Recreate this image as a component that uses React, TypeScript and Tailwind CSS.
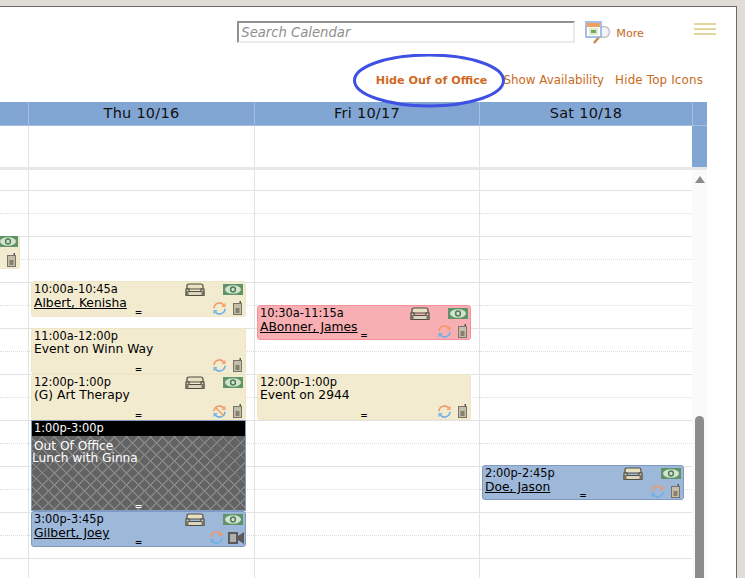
const Money = () => (
  <svg width="20" height="11" viewBox="0 0 20 11">
    <rect width="20" height="11" fill="#5f9368" />
    <ellipse cx="10" cy="5.5" rx="8" ry="4.2" fill="#d5e2d0" />
    <circle cx="10" cy="5.5" r="2.4" fill="none" stroke="#4c7f58" strokeWidth="1.5" />
  </svg>
);

const Couch = () => (
  <svg width="20" height="13" viewBox="0 0 20 13">
    <path d="M4 1h12q2 0 2 2v3H2V3q0-2 2-2z" fill="#e8e0c0" stroke="#4f4c44" strokeWidth="1.2" />
    <path d="M1 6h3v2.5h12V6h3v6.5H1z" fill="#dcd6bc" stroke="#4f4c44" strokeWidth="1.2" />
    <path d="M0.5 8v4.5h3V8zM16.5 8v4.5h3V8z" fill="#77735f" />
  </svg>
);

const Sync = ({ off }: { off?: boolean }) => (
  <svg width="13" height="13" viewBox="0 0 13 13" fill="none">
    <path d="M1 6.2A5.5 5.5 0 0 1 10.9 3.2" stroke="#f09a6a" strokeWidth="1.6" />
    <path d="M8.8 4.2l3 .2.3-3" stroke="#f09a6a" strokeWidth="1.3" />
    <path d="M12 6.8A5.5 5.5 0 0 1 2.1 9.8" stroke="#6fb0e8" strokeWidth="1.6" />
    <path d="M4.2 8.8l-3-.2-.3 3" stroke="#6fb0e8" strokeWidth="1.3" />
    {off && <path d="M2.5 2.5l8 8" stroke="#f09a6a" strokeWidth="1.5" />}
  </svg>
);

const Phone = () => (
  <svg width="9" height="14" viewBox="0 0 9 14">
    <path d="M6.5 0h1.5v3H6.5z" fill="#555" />
    <rect x="0.5" y="2.5" width="8" height="11" fill="#c4bdaa" stroke="#77736a" />
    <rect x="2.5" y="7" width="4" height="5" fill="#85816f" />
  </svg>
);

const Camera = () => (
  <svg width="16" height="12" viewBox="0 0 16 12">
    <rect width="10" height="12" fill="#5c5a58" />
    <rect x="2" y="2" width="6" height="8" fill="#b0b0b0" />
    <path d="M10 4l6-4v12l-6-4z" fill="#5c5a58" />
  </svg>
);

const CalendarSearch = () => (
  <svg width="26" height="23" viewBox="0 0 26 23">
    <circle cx="19" cy="11" r="5.5" fill="#f4f4f4" stroke="#c4c4c4" strokeWidth="1.5" />
    <path d="M14 16l-5 6" stroke="#c98a4a" strokeWidth="2.4" />
    <rect x="1" y="1" width="15" height="15" fill="#fff" stroke="#92b0dc" strokeWidth="1.6" />
    <rect x="2" y="2" width="13" height="4" fill="#f0a060" />
    <rect x="4" y="7" width="9" height="7" fill="#dcecc8" />
    <rect x="6" y="9" width="5" height="3" fill="#7aa860" />
  </svg>
);

type Item = {
  left: number;
  top: number;
  width: number;
  height: number;
  time: string;
  title: string;
  link?: boolean;
  color: string;
  couch?: boolean;
  money?: boolean;
  off?: boolean;
  camera?: boolean;
};

const beige = "bg-[#f3ebcf] border-[#efe6c8]";
const blue = "bg-[#9db8d9] border-[#7f9cc0]";
const pink = "bg-[#f8afb3] border-[#f59298]";

const days: { label: string; width: string; items: Item[] }[] = [
  {
    label: "Thu 10/16",
    width: "w-[226px]",
    items: [
      { left: 2, top: 111, width: 215, height: 36, time: "10:00a-10:45a", title: "Albert, Kenisha", link: true, color: beige, couch: true, money: true },
      { left: 2, top: 158, width: 215, height: 46, time: "11:00a-12:00p", title: "Event on Winn Way", color: beige },
      { left: 2, top: 204, width: 215, height: 46, time: "12:00p-1:00p", title: "(G) Art Therapy", color: beige, couch: true, money: true, off: true },
      { left: 2, top: 341, width: 215, height: 36, time: "3:00p-3:45p", title: "Gilbert, Joey", link: true, color: blue, couch: true, money: true, camera: true },
    ],
  },
  {
    label: "Fri 10/17",
    width: "w-[225px]",
    items: [
      { left: 2, top: 135, width: 214, height: 35, time: "10:30a-11:15a", title: "ABonner, James", link: true, color: pink, couch: true, money: true },
      { left: 2, top: 204, width: 214, height: 46, time: "12:00p-1:00p", title: "Event on 2944", color: beige },
    ],
  },
  {
    label: "Sat 10/18",
    width: "w-[213px]",
    items: [
      { left: 2, top: 295, width: 202, height: 35, time: "2:00p-2:45p", title: "Doe, Jason", link: true, color: blue, couch: true, money: true },
    ],
  },
];

const Rows = () => (
  <div className="flex flex-col">
    <div className="h-[21px] border-b border-[#e2e2e2]" />
    {Array.from({ length: 17 }).map((_, i) => (
      <div
        key={i}
        className={
          i % 2 === 0
            ? "h-[23px] border-b border-dotted border-[#dcdcdc]"
            : "h-[23px] border-b border-[#e2e2e2]"
        }
      />
    ))}
  </div>
);

const EventCard = ({ item }: { item: Item }) => (
  <div
    className={`absolute rounded-[3px] border text-black ${item.color}`}
    style={{ left: item.left, top: item.top, width: item.width, height: item.height }}
  >
    <div className="pl-[2px] text-[11.4px] leading-[14px]">{item.time}</div>
    <div className={item.link ? "pl-[2px] text-[12.3px] leading-[14px] underline" : "pl-[2px] text-[12.3px] leading-[13px]"}>
      {item.title}
    </div>
    <div className="absolute inset-x-0 bottom-[-1px] text-center text-[9px] leading-[10px] font-bold">=</div>
    <div className="absolute top-[1px] right-[2px] flex items-center gap-[18px]">
      {item.couch && <Couch />}
      {item.money && <Money />}
    </div>
    <div className={item.camera ? "absolute right-[1px] bottom-[2px] flex items-end gap-[5px]" : "absolute right-[3px] bottom-[1px] flex items-end gap-[7px]"}>
      <Sync off={item.off} />
      {item.camera ? <Camera /> : <Phone />}
    </div>
  </div>
);

export default function App() {
  return (
    <div className="h-[578px] w-[745px] overflow-hidden bg-[#e0dcd6] pt-[6px] pr-[8px] font-['DejaVu_Sans',sans-serif]">
      <div className="relative h-[572px] border-t border-r border-[#6b6b6b] bg-white">
        {/* Top bar */}
        <div className="flex h-[95px] flex-col items-end">
          <div className="flex pt-[14px]">
            <input
              placeholder="Search Calendar"
              className="h-[22px] w-[338px] border-2 border-t-[#8f8f8f] border-r-[#ebebeb] border-b-[#ebebeb] border-l-[#8f8f8f] px-[2px] text-[13.2px] italic placeholder:text-[#8f8f8f]"
            />
            <div className="ml-[10px] flex items-center">
              <CalendarSearch />
            </div>
            <a className="ml-[5px] pt-[5px] text-[11.2px] text-[#c8691c]">More</a>
            <div className="mt-[2px] mr-[20px] ml-[50px] flex w-[22px] flex-col gap-[3px]">
              <div className="h-[2px] bg-[#e2d69f]" />
              <div className="h-[2px] bg-[#e2d69f]" />
              <div className="h-[2px] bg-[#e2d69f]" />
            </div>
          </div>
          <div className="mt-[28px] flex items-center pr-[33px] text-[11.9px] text-[#c8691c]">
            <a className="mr-[16px] text-[11.2px] font-bold text-[#cf6a1f]">Hide Ouf of Office</a>
            <a className="mr-[11px]">Show Availability</a>
            <a className="tracking-[0.15px]">Hide Top Icons</a>
          </div>
        </div>

        {/* Circle drawn around the link */}
        <svg className="absolute top-[47px] left-[353px]" width="154" height="54" viewBox="0 0 154 54" fill="none">
          <ellipse cx="76" cy="26.5" rx="74.5" ry="25.5" stroke="#3f51e3" strokeWidth="3" />
        </svg>

        {/* Calendar */}
        <div className="w-[707px]">
          <div className="flex h-[23px] bg-[#82a6d4] text-[14.5px] tracking-[0.25px] text-[#111]">
            <div className="w-[28px]" />
            {days.map((day) => (
              <div key={day.label} className={`${day.width} flex items-center justify-center border-l border-[#a3bfe0] pt-[1px]`}>
                {day.label}
              </div>
            ))}
            <div className="flex-1 border-l border-[#a3bfe0]" />
          </div>
          <div className="flex h-[42px] border-t border-[#a3bfe0]">
            <div className="w-[28px]" />
            {days.map((day) => (
              <div key={day.label} className={`${day.width} border-l border-[#e2e2e2]`} />
            ))}
            <div className="flex-1 bg-[#82a6d4]" />
          </div>
          <div className="h-[3px] bg-[#e8e8e8]" />
          <div className="flex h-[408px] overflow-hidden">
            <div className="relative w-[28px]">
              <Rows />
              <div className={`absolute top-[66px] right-[8px] h-[33px] w-[20px] rounded-r-[3px] border-r border-b ${beige}`}>
                <div className="absolute top-[0px] right-[1px]">
                  <Money />
                </div>
                <div className="absolute right-[3px] bottom-[1px]">
                  <Phone />
                </div>
              </div>
            </div>
            {days.map((day) => (
              <div key={day.label} className={`${day.width} relative border-l border-[#e2e2e2]`}>
                <Rows />
                {day.items.map((item) => (
                  <EventCard key={item.time} item={item} />
                ))}
                {day.label === "Thu 10/16" && (
                  <div className="absolute top-[250px] left-[2px] h-[91px] w-[215px] border border-[#7f9cc0] bg-[#636363] bg-[repeating-linear-gradient(45deg,transparent_0,transparent_7.5px,#858585_7.5px,#858585_8.5px),repeating-linear-gradient(-45deg,transparent_0,transparent_7.5px,#858585_7.5px,#858585_8.5px)] text-white">
                    <div className="h-[15px] bg-black pl-[2px] text-[11.4px] leading-[15px]">1:00p-3:00p</div>
                    <div className="pt-[4px] pl-[2px] text-[12.2px] leading-[12px]">Out Of Office</div>
                    <div className="text-[12.2px] leading-[12px]">Lunch with Ginna</div>
                    <div className="absolute inset-x-0 bottom-[-1px] text-center text-[9px] leading-[10px] font-bold">=</div>
                  </div>
                )}
              </div>
            ))}
            <div className="relative flex-1 bg-[#fafafa]">
              <div className="mx-auto mt-[6px] h-0 w-0 border-x-[5px] border-b-[7px] border-x-transparent border-b-[#8c8c8c]" />
              <div className="mx-auto mt-[233px] h-[200px] w-[9px] rounded-full bg-[#8c8c8c]" />
            </div>
          </div>
        </div>
      </div>
    </div>
  );
}
